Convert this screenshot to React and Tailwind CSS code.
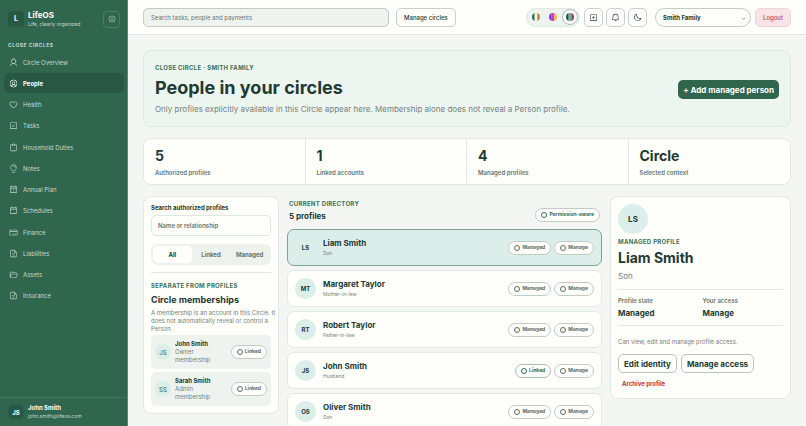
import React, { useState } from "react";
import {
  PiUser, PiUserCircle, PiHeart, PiCheckSquare, PiClipboard, PiLightbulb, PiCalendarDots, PiCalendarBlank,
  PiCreditCard, PiFileText, PiFolderOpen, PiPlusCircle, PiPlusSquare, PiBell, PiMoon, PiCaretDown,
} from "react-icons/pi";

const NAV = [
  ["Circle Overview", PiUser],
  ["People", PiUserCircle],
  ["Health", PiHeart],
  ["Tasks", PiCheckSquare],
  ["Household Duties", PiClipboard],
  ["Notes", PiLightbulb],
  ["Annual Plan", PiCalendarDots],
  ["Schedules", PiCalendarBlank],
  ["Finance", PiCreditCard],
  ["Liabilities", PiFileText],
  ["Assets", PiFolderOpen],
  ["Insurance", PiFileText],
];

const PEOPLE = [
  ["LS", "Liam Smith", "Son", "Managed"],
  ["MT", "Margaret Taylor", "Mother-in-law", "Managed"],
  ["RT", "Robert Taylor", "Father-in-law", "Managed"],
  ["JS", "John Smith", "Husband", "Linked"],
  ["OS", "Oliver Smith", "Son", "Managed"],
];

const STATS = [
  ["5", "Authorized profiles"],
  ["1", "Linked accounts"],
  ["4", "Managed profiles"],
  ["Circle", "Selected context"],
];

const THEMES = [
  ["Forest", ["#2f6b52", "#f3efe2", "#b98a4a"]],
  ["Sunset", ["#7b3fe0", "#c93fb4", "#f6b45c"]],
  ["Garden", ["#1f5a49", "#5fb3a6", "#a8325a"]],
];

function Pill({ children, tone = "text-[#5c6b65] border-[#c3cbc7]" }) {
  return (
    <span className={`flex h-[14px] shrink-0 items-center gap-[2px] rounded-full border bg-[#fefefb] px-[5px] text-[5px] font-bold ${tone}`}>
      <span className="size-[6px] rounded-full border border-current" />
      {children}
    </span>
  );
}

function Eyebrow({ children }) {
  return <p className="text-[6px] leading-[8px] font-bold tracking-wider text-[#3a7059] uppercase">{children}</p>;
}

function Sidebar() {
  return (
    <aside className="flex w-32 shrink-0 flex-col border-r border-[#5b8673] bg-[#30654e] text-[#c4dacf]">
      <div className="flex items-center gap-1 pt-[10px] pr-[7px] pl-2">
        <div className="grid size-4 place-items-center rounded-[4px] bg-[#285844] text-[7px] font-bold text-white">L</div>
        <div className="flex-1">
          <p className="text-[8px] leading-[10px] font-bold text-white">LifeOS</p>
          <p className="text-[5px] leading-[8px] whitespace-nowrap">Life, clearly organized</p>
        </div>
        <button aria-label="Collapse menu" className="grid size-[17px] place-items-center rounded-[4px] border border-[#4b7c67]">
          <PiPlusCircle size={8} />
        </button>
      </div>
      <p className="px-2 pt-[13px] text-[5px] leading-[8px] font-bold tracking-widest">CLOSE CIRCLES</p>
      <nav className="mt-[3px] mr-[3px] ml-1 flex h-[254px] flex-col justify-between">
        {NAV.map(([label, Icon]) => (
          <a
            key={label}
            href="#"
            aria-current={label === "People" ? "page" : undefined}
            className={`flex h-5 items-center gap-[5px] rounded-[5px] px-[5px] text-[6px] ${label === "People" ? "bg-[#285844] font-bold text-white" : ""}`}
          >
            <Icon size={9} />
            {label}
          </a>
        ))}
      </nav>
      <div className="mt-auto flex items-center gap-1 border-t border-[#467661] px-2 py-[6px]">
        <div className="grid size-4 place-items-center rounded-full bg-[#285844] text-[6px] font-bold text-white">JS</div>
        <div>
          <p className="text-[6px] leading-[8px] font-bold text-white">John Smith</p>
          <p className="text-[5px] leading-[8px]">john.smith@lifeos.com</p>
        </div>
      </div>
    </aside>
  );
}

function IconButton({ label, children }) {
  return (
    <button aria-label={label} className="grid size-[19px] place-items-center rounded-[5px] border border-[#c9d0cc]">
      {children}
    </button>
  );
}

function Header() {
  return (
    <header className="flex h-[35px] shrink-0 items-center border-b border-[#e2e7e3] bg-[#fefefb] px-[15px]">
      <input
        aria-label="Search"
        placeholder="Search tasks, people and payments"
        className="h-[19px] w-full max-w-[246px] rounded-[5px] border border-[#c3cbc7] bg-[#eef3ef] px-[7px] text-[6px] placeholder:text-[#66756f]"
      />
      <button className="ml-[7px] h-[19px] shrink-0 rounded-[5px] border border-[#c9d0cc] px-[7px] text-[6px] font-medium">Manage circles</button>
      <div className="ml-auto flex shrink-0 items-center gap-1">
        <div className="flex h-[19px] items-center gap-[1px] rounded-full border border-[#e0e8e3] bg-[#edf4f0] px-[1px]">
          {THEMES.map(([name, colors], i) => (
            <button key={name} aria-label={name} className={`grid size-4 place-items-center rounded-full ${i === 2 ? "border border-[#b0bcb6] bg-[#fefefb]" : ""}`}>
              <svg width="8" height="8" viewBox="0 0 9 9">
                <clipPath id={name}><circle cx="4.5" cy="4.5" r="4.5" /></clipPath>
                <g clipPath={`url(#${name})`}>
                  {colors.map((c, n) => <rect key={c} x={n * 3} width="3" height="9" fill={c} />)}
                </g>
              </svg>
            </button>
          ))}
        </div>
        <div className="flex gap-[3px]">
          <IconButton label="Add"><PiPlusSquare size={9} /></IconButton>
          <IconButton label="Notifications"><PiBell size={9} /></IconButton>
          <IconButton label="Dark mode"><PiMoon size={9} /></IconButton>
        </div>
        <div className="relative ml-1 flex">
          <select aria-label="Circle" className="h-[19px] w-24 appearance-none rounded-full border border-[#c3cbc7] px-[7px] text-[6px] font-bold">
            <option>Smith Family</option>
          </select>
          <PiCaretDown size={5} className="pointer-events-none absolute top-2 right-[5px]" />
        </div>
        <button className="h-[19px] rounded-[5px] border border-[#eed3d7] bg-[#f8e4e7] px-[7px] text-[6px] font-medium text-[#bd4256]">Logout</button>
      </div>
    </header>
  );
}

function FilterPanel() {
  const [tab, setTab] = useState("All");
  return (
    <section className="rounded-[8px] border border-[#e2e9e4] bg-[#fefefb] p-[7px]">
      <label htmlFor="profile-search" className="block text-[6px] leading-[8px] font-bold">Search authorized profiles</label>
      <input
        id="profile-search"
        placeholder="Name or relationship"
        className="mt-[3px] block h-[21px] w-full rounded-[5px] border border-[#e0e6e2] px-[6px] text-[6px] font-semibold placeholder:text-[#66756f]"
      />
      <div className="mt-2 grid h-[21px] grid-cols-3 rounded-[6px] bg-[#edf2ee] p-[2px]">
        {["All", "Linked", "Managed"].map((t) => (
          <button
            key={t}
            aria-pressed={tab === t}
            onClick={() => setTab(t)}
            className={`rounded-[5px] text-[6px] font-bold ${tab === t ? "bg-[#fefefb]" : "text-[#66756f]"}`}
          >
            {t}
          </button>
        ))}
      </div>
      <div className="mt-[7px] border-t border-[#e2e7e3] pt-[9px]">
        <Eyebrow>Separate from profiles</Eyebrow>
        <h2 className="mt-1 text-[9px] leading-[11px] font-bold">Circle memberships</h2>
        <p className="mt-1 -mr-[5px] text-[6px] leading-[8px] text-[#75827c]">
          A membership is an account in this Circle. It does not automatically reveal or control a Person.
        </p>
        <ul className="mt-[2px] flex flex-col gap-[3px]">
          {[["JS", "John Smith", "Owner"], ["SS", "Sarah Smith", "Admin"]].map(([initials, name, role]) => (
            <li key={name} className="flex items-center rounded-[5px] bg-[#eef3ef] px-1 py-[5px]">
              <span className="grid size-4 place-items-center rounded-full bg-[#dbeeea] text-[6px] font-medium text-[#4b6f66]">{initials}</span>
              <div className="ml-1 flex-1 text-[6px] leading-[8px]">
                <p className="font-bold">{name}</p>
                <p className="w-9 text-[#75827c]">{role} membership</p>
              </div>
              <Pill>Linked</Pill>
            </li>
          ))}
        </ul>
      </div>
    </section>
  );
}

function Directory() {
  return (
    <section>
      <div className="flex items-end justify-between px-[2px] pt-1">
        <div>
          <Eyebrow>Current directory</Eyebrow>
          <h2 className="mt-[3px] text-[8px] leading-[11px] font-bold">5 profiles</h2>
        </div>
        <Pill tone="text-[#3a6b58] border-[#c3cbc7]">Permission-aware</Pill>
      </div>
      <ul className="mt-[7px] flex flex-col gap-1">
        {PEOPLE.map(([initials, name, relation, state], i) => (
          <li key={name}>
            <button
              className={`flex h-[37px] w-full items-center gap-[3px] rounded-[7px] border px-[7px] text-left ${i === 0 ? "border-[#7fa298] bg-[#dbeeea]" : "border-[#e2e9e4] bg-[#fefefb]"}`}
            >
              <span className="grid size-[21px] place-items-center rounded-full bg-[#dbeeea] text-[6px] font-bold">{initials}</span>
              <span className="ml-1 flex-1">
                <span className="block text-[8px] leading-[11px] font-bold">{name}</span>
                <span className="block text-[5px] leading-[8px] text-[#75827c]">{relation}</span>
              </span>
              <Pill tone={state === "Linked" ? "text-[#2f6b52] border-[#a9bdb3]" : undefined}>{state}</Pill>
              <Pill>Manage</Pill>
            </button>
          </li>
        ))}
      </ul>
    </section>
  );
}

function ProfilePanel() {
  return (
    <section className="rounded-[8px] border border-[#e2e9e4] bg-[#fefefb] px-[7px] pt-[7px] pb-[10px]">
      <span className="grid size-[30px] place-items-center rounded-full bg-[#dbeeea] text-[8px] font-bold">LS</span>
      <div className="mt-1"><Eyebrow>Managed profile</Eyebrow></div>
      <h2 className="mt-[3px] text-[14px] leading-[18px] font-bold">Liam Smith</h2>
      <p className="mt-1 text-[8px] leading-[10px] text-[#75827c]">Son</p>
      <dl className="mt-2 grid grid-cols-2 gap-1 border-y border-[#e2e7e3] py-[7px]">
        {[["Profile state", "Managed"], ["Your access", "Manage"]].map(([term, value]) => (
          <div key={term}>
            <dt className="text-[6px] leading-[8px] font-semibold text-[#66756f]">{term}</dt>
            <dd className="mt-[3px] text-[8px] leading-[10px] font-bold">{value}</dd>
          </div>
        ))}
      </dl>
      <p className="mt-3 text-[6px] leading-[8px] text-[#75827c]">Can view, edit and manage profile access.</p>
      <div className="mt-2 flex gap-1">
        <button className="h-[19px] rounded-[5px] border border-[#b9c6c0] px-[5px] text-[8px] font-bold">Edit identity</button>
        <button className="h-[19px] rounded-[5px] border border-[#b9c6c0] px-[5px] text-[8px] font-bold">Manage access</button>
      </div>
      <button className="mt-[7px] block px-1 text-[6px] leading-[8px] font-bold text-[#bd3348]">Archive profile</button>
    </section>
  );
}

export default function App() {
  return (
    <div className="flex h-screen overflow-hidden bg-[#f4f6f3] font-[Inter,'Liberation_Sans',sans-serif] text-[#213a33]">
      <Sidebar />
      <div className="flex min-w-0 flex-1 flex-col">
        <Header />
        <main className="flex-1 overflow-hidden px-[15px] pt-[15px]">
          <section className="flex items-center justify-between rounded-[8px] border border-[#dbe9e2] bg-[#edf5f1] px-[11px] pt-[13px] pb-[11px]">
            <div>
              <Eyebrow>Close circle · Smith Family</Eyebrow>
              <h1 className="mt-1 text-[18px] leading-6 font-bold">People in your circles</h1>
              <p className="mt-1 text-[8px] leading-[11px] text-[#75827c]">
                Only profiles explicitly available in this Circle appear here. Membership alone does not reveal a Person profile.
              </p>
            </div>
            <button className="h-[19px] shrink-0 rounded-[5px] bg-[#30654e] px-[5px] text-[8px] font-bold text-white">+ Add managed person</button>
          </section>
          <dl className="mt-[11px] grid grid-cols-4 divide-x divide-[#e2e7e3] rounded-[8px] border border-[#e2e9e4] bg-[#fefefb]">
            {STATS.map(([value, label]) => (
              <div key={label} className="flex flex-col-reverse px-[11px] pt-2 pb-[7px]">
                <dt className="mt-1 text-[6px] leading-[8px] font-semibold text-[#66756f]">{label}</dt>
                <dd className="text-[14px] leading-[18px] font-bold">{value}</dd>
              </div>
            ))}
          </dl>
          <div className="mt-[11px] grid grid-cols-[136px_1fr_181px] items-start gap-2">
            <FilterPanel />
            <Directory />
            <ProfilePanel />
          </div>
        </main>
      </div>
    </div>
  );
}
